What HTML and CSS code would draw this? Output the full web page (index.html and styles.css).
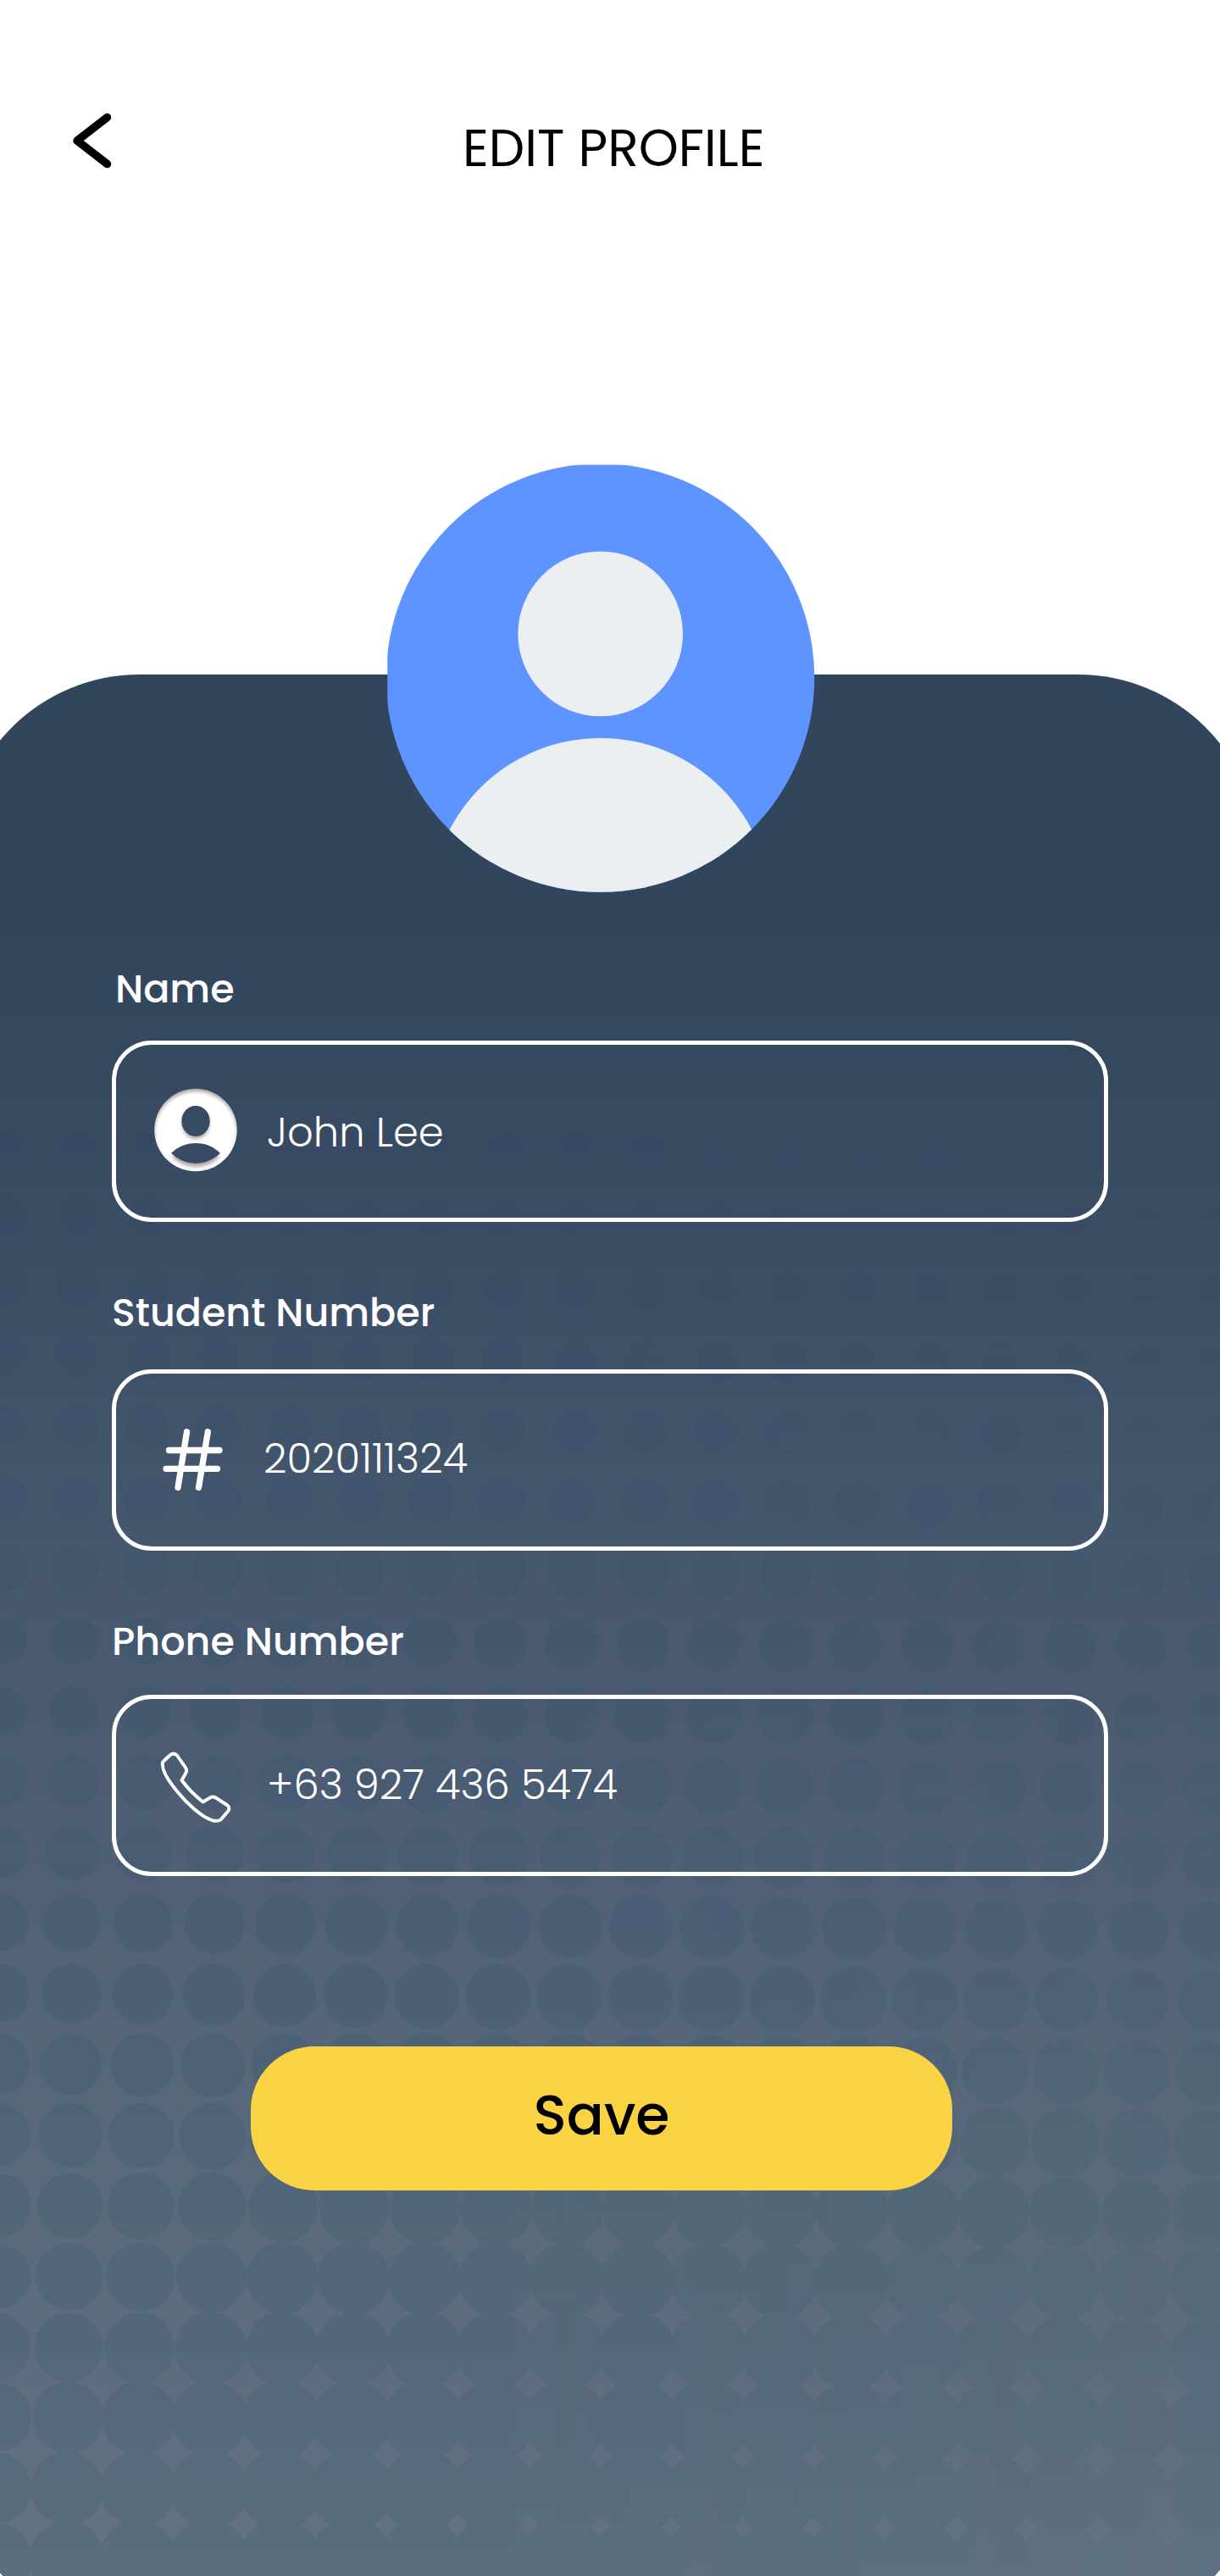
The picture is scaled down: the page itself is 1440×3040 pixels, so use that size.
FILE: index.html
```html
<!DOCTYPE html>
<html lang="en">
<head>
<meta charset="utf-8">
<title>Edit Profile</title>
<link rel="stylesheet" href="styles.css">
</head>
<body>
<main class="screen">
  <header class="topbar">
    <button class="back" aria-label="Back">
      <svg width="56" height="72" viewBox="80 130 56 72"><path d="M126.500 138.500 91 166l35.500 27.500" fill="none" stroke="#000" stroke-width="9.500" stroke-linecap="round" stroke-linejoin="round"/></svg>
    </button>
    <h1 class="title">EDIT PROFILE</h1>
  </header>
  <section class="panel">
    <div class="panel-bg"><div class="fade"><svg class="dots" width="1440" height="2244" viewBox="0 796 1440 2244"><g id="dots"></g></svg></div></div>
    <svg class="avatar" width="505" height="505" viewBox="457 548 505 505">
      <defs><clipPath id="face"><circle cx="708.500" cy="800" r="252.800"/></clipPath></defs>
      <g clip-path="url(#face)">
        <rect x="457.300" y="548.600" width="505" height="505" fill="#5e94ff"/>
        <circle cx="708.700" cy="748" r="97.300" fill="#ebeff2"/>
        <circle cx="709" cy="1072" r="201" fill="#ebeff2"/>
      </g>
    </svg>
    <form class="form">
      <div class="group">
        <label class="label label-name">Name</label>
        <div class="field">
          <svg class="icon icon-person" width="100" height="100" viewBox="0 0 100 100">
            <defs>
              <mask id="person"><rect width="100" height="100" fill="#fff"/><ellipse cx="50" cy="39" rx="16.700" ry="18" fill="#000"/><path d="M21 77Q33 65 50 65T79 77Q66 89 50 89T21 77Z" fill="#000"/></mask>
              <clipPath id="disc"><circle cx="50" cy="49.500" r="48.800"/></clipPath>
              <filter id="soft" x="-20%" y="-20%" width="140%" height="140%"><feGaussianBlur stdDeviation="2"/></filter>
            </defs>
            <g mask="url(#person)" clip-path="url(#disc)">
              <rect width="100" height="100" fill="#fff"/>
              <g filter="url(#soft)" fill="#a9a3a5">
                <path fill-rule="evenodd" d="M-10-10H110V110H-10ZM1 53a49 49 0 0 0 98 0a49 49 0 0 0-98 0Z"/>
                <ellipse cx="50" cy="42" rx="16" ry="18"/>
                <path d="M22 81Q33 69 50 69T78 81Q66 93 50 93T22 81Z"/>
              </g>
            </g>
          </svg>
          <span class="value value-name">John Lee</span>
        </div>
      </div>
      <div class="group">
        <label class="label label-student">Student Number</label>
        <div class="field">
          <svg class="icon" width="100" height="100" viewBox="0 0 100 100"><path d="M18.500 38.500H78M15 60.300H75.500M39.500 16.800 29 82.500M64.300 16.800 53.500 82.500" fill="none" stroke="#fff" stroke-width="7.300" stroke-linecap="round"/></svg>
          <span class="value value-student">2020111324</span>
        </div>
      </div>
      <div class="group">
        <label class="label label-phone">Phone Number</label>
        <div class="field">
          <svg class="icon" width="100" height="100" viewBox="181 2057 100 100"><path d="M200.500 2071.500Q204 2068 208.500 2071L219 2086Q221 2089 219.500 2092L214.500 2101Q225 2115 239.500 2126.500L248 2121.500Q251 2119.500 254.500 2121.500L268.500 2130.500Q271.500 2133 269.500 2137L260.500 2147.500Q257 2150 250 2148C238 2144 222 2130 209 2114C200 2103 192 2090 192 2083Q191 2080 193.500 2078Z" fill="none" stroke="#fff" stroke-width="3.900" stroke-linejoin="round"/></svg>
          <span class="value value-phone">+63 927 436 5474</span>
        </div>
      </div>
      <button class="save" type="button"><span>Save</span></button>
    </form>
  </section>
</main>
<script src="dots.js"></script>
</body>
</html>
```
FILE: styles.css
```css
* { box-sizing: border-box; }
body { margin: 0; background: #fff; font-family: "Poppins", "Inter", sans-serif; }
button { border: 0; padding: 0; background: none; font: inherit; }
.screen { width: 1440px; height: 3040px; overflow: hidden; display: flex; flex-direction: column; }
.topbar { flex: none; height: 796px; padding: 130px 0 0 80px; display: flex; align-items: flex-start; }
.back { width: 56px; height: 72px; }
.back svg { display: block; }
.title { margin: 10px 0 0 410px; font-size: 60px; line-height: 70px; font-weight: 400; white-space: nowrap; }
.panel { position: relative; flex: none; height: 2244px; }
.panel-bg { position: absolute; left: -49.5px; top: 0; width: 1535.5px; height: 2318px; border-radius: 214px; overflow: hidden;
  background: linear-gradient(#31455d 0, #31455d 300px, #3c4f66 730px, #43556c 930px, #4b5c72 1250px, #526378 1500px, #58697b 1720px, #5e6e80 2040px, #637384 2244px); }
.fade { width: 1440px; margin-left: 49.5px;
  -webkit-mask-image: linear-gradient(to right, #000 40%, rgba(0,0,0,.6));
  mask-image: linear-gradient(to right, #000 40%, rgba(0,0,0,.6)); }
.dots { display: block; opacity: .145;
  -webkit-mask-image: linear-gradient(transparent 450px, rgba(0,0,0,.6) 900px, rgba(0,0,0,.75) 1200px, #000 1450px, rgba(0,0,0,.85) 2244px);
  mask-image: linear-gradient(transparent 450px, rgba(0,0,0,.6) 900px, rgba(0,0,0,.75) 1200px, #000 1450px, rgba(0,0,0,.85) 2244px); }
.avatar { position: absolute; left: 457px; top: -248px; }
.form { position: relative; padding: 336px 132px 0; display: flex; flex-direction: column; }
.group { display: flex; flex-direction: column; color: #fff; }
.group + .group { margin-top: 80px; }
.label { height: 94px; font-size: 46px; line-height: 54px; font-weight: 500; white-space: nowrap; }
.label-name { height: 96px; padding: 8px 0 0 4px; }
.label-student { padding-top: 0; }
.label-phone { height: 90px; padding-top: 0; }
.field { height: 214px; border: 5px solid #fff; border-radius: 47px; display: flex; align-items: center; padding-left: 44px; }
.icon { flex: none; }
.icon-person { margin-top: -3px; }
.value { font-size: 48px; line-height: 60px; font-weight: 300; white-space: nowrap; margin-left: 34px; }
.value-name { padding-top: 4px; }
.value-student { margin-left: 30px; padding-bottom: 3px; }
.save { width: 828px; height: 170px; margin: 201px 0 0 164px; border-radius: 75px; background: #fad343; color: #000; font-size: 65px; font-weight: 500; line-height: 74px; padding-bottom: 6px; }
```
FILE: dots.js
```js
// Halftone: dot radius grows towards the bottom centre of the panel.
const stops = [
  [1250, 20, 19, 17], [1428, 24, 22, 20], [1681, 25, 25.5, 23], [1850, 27, 30, 27],
  [2022, 28.5, 33, 30], [2269, 33, 37.5, 34.5], [2518, 36.8, 41.5, 39],
  [2685, 38.5, 44, 41.5], [2770, 39.5, 45.5, 42.5], [2852, 40.5, 48.5, 44],
  [2938, 41.7, 50, 45], [3110, 44.5, 54, 48]
];
function radius(x, y) {
  let i = 0;
  while (i < stops.length - 2 && y > stops[i + 1][0]) i++;
  const a = stops[i], b = stops[i + 1];
  const t = (y - a[0]) / (b[0] - a[0]);
  const [l, m, r] = [1, 2, 3].map(k => a[k] + (b[k] - a[k]) * t);
  const u = x / 1440;
  return l * (1 - u) * (1 - 2 * u) + 4 * m * u * (1 - u) + r * u * (2 * u - 1);
}
let out = "";
for (let row = -12; row < 11; row++) {
  for (let col = 0; col < 19; col++) {
    const x = col * 83.9 - row * 0.7 + 1.2;
    const y = 2269 + row * 83.4 + col * 0.58;
    out += `<circle cx="${x}" cy="${y}" r="${radius(x, y)}"/>`;
  }
}
const dots = document.getElementById("dots");
dots.setAttribute("fill", "#204a6c");
dots.innerHTML = out;
```
